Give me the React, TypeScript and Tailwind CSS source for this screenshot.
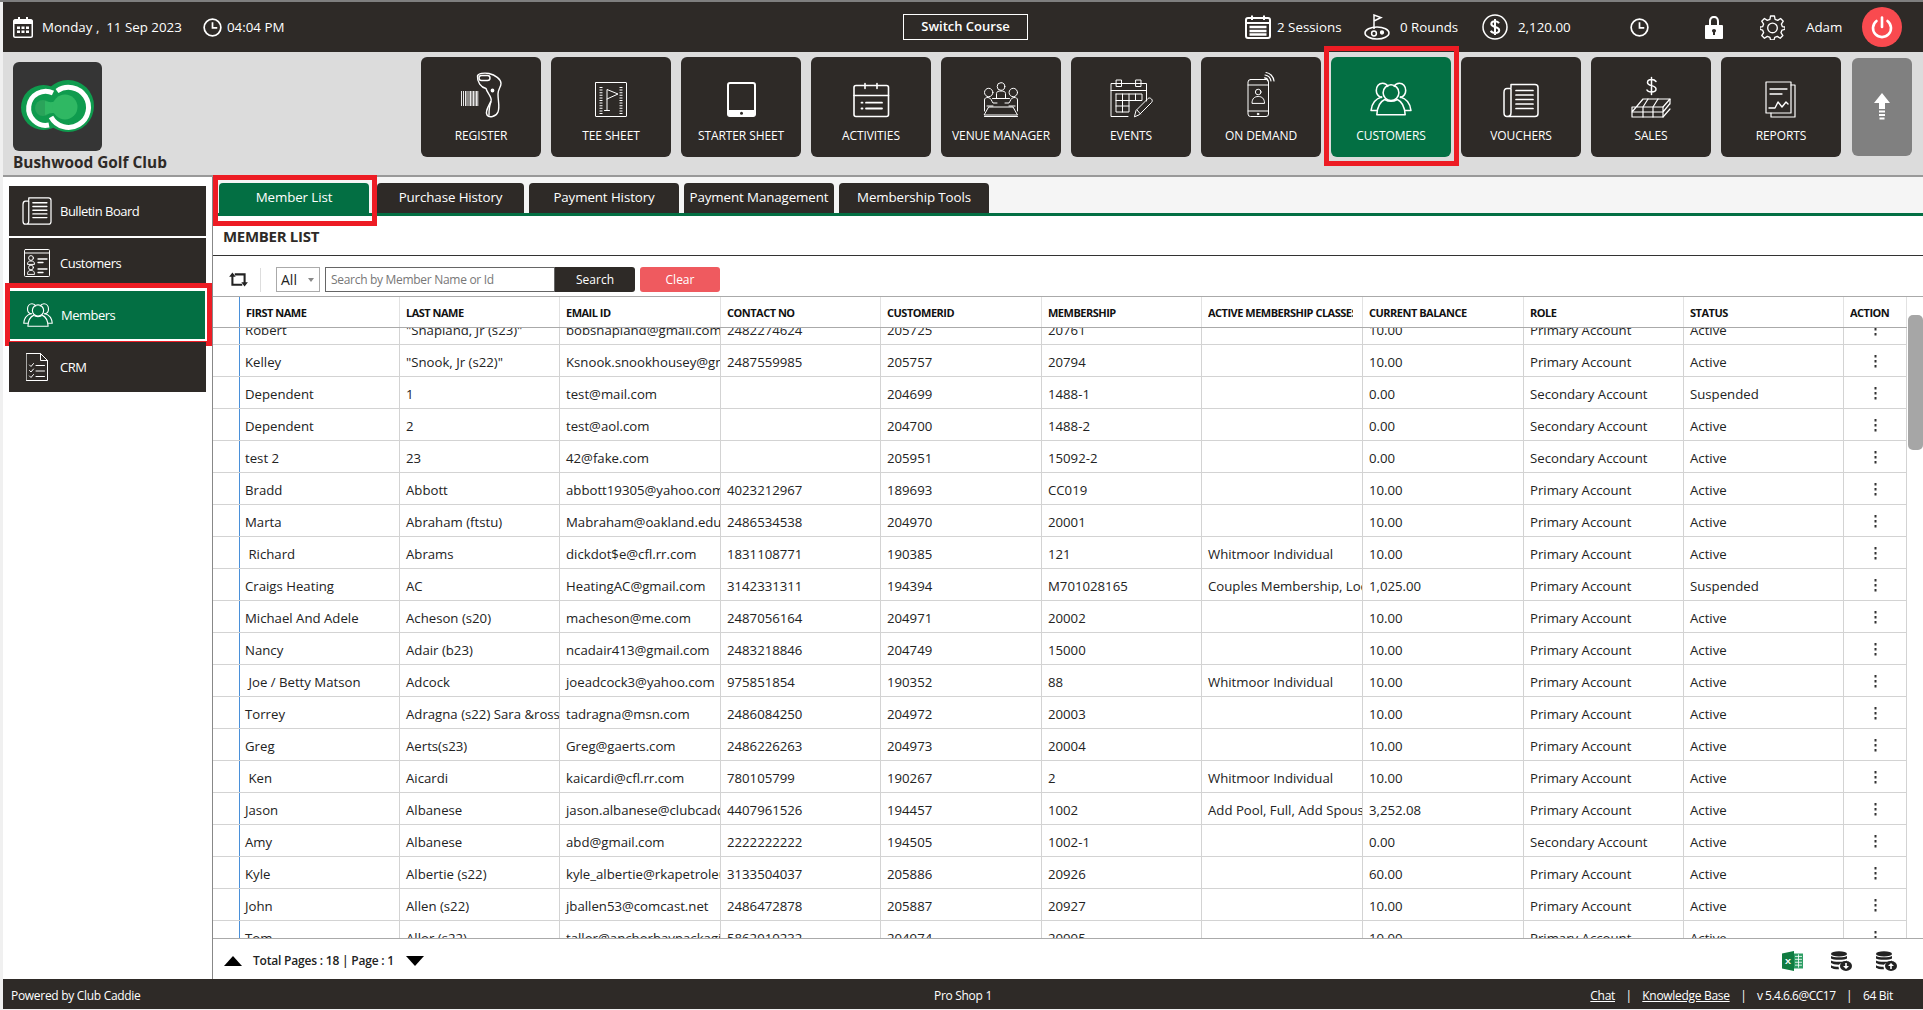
import React from 'react';

const font = { fontFamily: `'Open Sans', 'Noto Sans', sans-serif` };

type IconProps = { className?: string };

const stroke = { fill: 'none', stroke: 'currentColor', strokeWidth: 1.4, strokeLinecap: 'round', strokeLinejoin: 'round' } as const;

const NavSvg: React.FC<{ children: React.ReactNode }> = ({ children }) => (
  <svg viewBox="0 0 60 48" className="w-[60px] h-[48px] text-white" {...stroke}>{children}</svg>
);

const RegisterIcon = () => (
  <NavSvg>
    <path d="M26.5 5C27 2.5 33 1.5 38 2.5C44 4 50 8 50 12.5C50 16 47 18 47 23C47 30 49 36 47 41C45 46 38 47 36 44C34 41 37 36 40 30C41.5 26 36 22 35 17.5C30 16.5 26 11 26.5 5Z" />
    <rect x="28" y="4.5" width="11" height="5" rx="2.5" />
    <circle cx="41.5" cy="19.5" r="1.2" fill="currentColor" />
    <path d="M40 31C38 35 38 40 38 44" />
    <g stroke="currentColor" strokeLinecap="butt">
      <path d="M10.5 20V35M12.5 20V35M14.5 20V35M16 20V35M18 20V35M19.5 20V35M21 20V35M22.5 20V35M24 20V35M25.5 20V35M26.8 20V35" strokeWidth="0.9" />
    </g>
  </NavSvg>
);

const TeeSheetIcon = () => (
  <NavSvg>
    <rect x="14.5" y="11.5" width="31" height="34" rx="0.5" strokeWidth="1" />
    <path d="M20 16V43M40 16V43" strokeWidth="3" strokeDasharray="1 1.6" strokeLinecap="butt" />
    <path d="M26 39V18.5L37 23L26 28" strokeWidth="1" />
    <path d="M23.5 39.5H28.5" strokeWidth="1" />
  </NavSvg>
);

const TabletIcon = () => (
  <NavSvg>
    <rect x="17" y="12" width="27" height="33" rx="2" strokeWidth="2" />
    <path d="M17 39.5H44V43C44 44.5 43 45 42 45H19C18 45 17 44.5 17 43Z" fill="currentColor" strokeWidth="1" />
    <circle cx="30.5" cy="42.2" r="1.5" fill="#2e2a27" stroke="none" />
  </NavSvg>
);

const ActivitiesIcon = () => (
  <NavSvg>
    <rect x="13" y="14.5" width="34.5" height="31" rx="2" strokeWidth="1.6" />
    <path d="M13 24.5H47.5M24 12.5V17.5M36 12.5V17.5" strokeWidth="1.6" />
    <path d="M20.5 31.7H21.5M20.5 37.5H21.5M25 31.7H41M25 37.5H41" strokeWidth="1.8" />
  </NavSvg>
);

const VenueIcon = () => (
  <NavSvg>
    <g strokeWidth="1">
      <circle cx="17.7" cy="21.5" r="4.2" />
      <circle cx="30" cy="15.5" r="3.8" />
      <circle cx="42.3" cy="21.5" r="4.2" />
      <path d="M25.5 27V22.5C25.5 20.5 27.5 20 30 20C32.5 20 34.5 20.5 34.5 22.5V27" />
      <path d="M13.5 40V29C13.5 27 15 26.5 17 26.5C20 26.5 20.5 30 22 32H26M16 35H22" />
      <path d="M46.5 40V29C46.5 27 45 26.5 43 26.5C40 26.5 39.5 30 38 32H34M44 35H38" />
      <path d="M21.5 27.5H38.5M13.5 44H46.5L42 36H18Z" />
      <path d="M13.5 45.5H46.5" />
    </g>
  </NavSvg>
);

const EventsIcon = () => (
  <NavSvg>
    <g strokeWidth="1">
      <path d="M27 45.5H10V12.5H45.5V30" />
      <path d="M10 19.5H45.5" />
      <rect x="15.5" y="9" width="5" height="6.5" />
      <rect x="35" y="9" width="5" height="6.5" />
      <path d="M15 23H41V29.5H28M15 23V41H28V23M21.5 23V41M34.5 23V29.5M15 29.5H28M15 35H28" />
      <path d="M33.5 45.5L35 39.5L47 27.5C48 26.5 49.5 27 50.5 28C51.5 29 51.5 30.5 50.5 31.5L38.5 43.5Z" />
      <path d="M36 39L39.5 43" />
    </g>
  </NavSvg>
);

const OnDemandIcon = () => (
  <NavSvg>
    <g strokeWidth="1">
      <rect x="17" y="8.5" width="20.5" height="37" rx="2.5" />
      <path d="M17 14H37.5M17 40H37.5" />
      <circle cx="27.2" cy="21" r="2.8" />
      <path d="M21 32C21 27.5 23.5 25.5 27.2 25.5C31 25.5 33.5 27.5 33.5 32Z" />
      <circle cx="27" cy="43" r="0.8" fill="currentColor" />
      <path d="M34 4C37 4.5 39.5 7 40 10M35 1.5C39 2 42.5 5.5 43 10" strokeWidth="1.2" />
      <path d="M33.5 6.8C35.5 7 36.8 8.2 37 10" strokeWidth="1.2" />
    </g>
  </NavSvg>
);

const PeopleIcon: React.FC<IconProps> = ({ className }) => (
  <svg viewBox="0 0 40 34" className={className} {...stroke} strokeWidth={1.5}>
    <path d="M11 15.5C7.5 15 6 11.5 6 9C6 5 8.5 2 12 2C14 2 16 3 17 5" />
    <path d="M29 15.5C32.5 15 34 11.5 34 9C34 5 31.5 2 28 2C26 2 24 3 23 5" />
    <circle cx="20" cy="11" r="7.5" />
    <path d="M11 15C6 16.5 1.5 21 1 28H6.5" />
    <path d="M29 15C34 16.5 38.5 21 39 28H33.5" />
    <path d="M14 17.5C9.5 19.5 7 24 6.5 32H33.5C33 24 30.5 19.5 26 17.5C22.5 19.5 17.5 19.5 14 17.5Z" />
  </svg>
);

const NewspaperIcon: React.FC<IconProps> = ({ className }) => (
  <svg viewBox="0 0 36 34" className={className} {...stroke} strokeWidth={1.5}>
    <path d="M8 4V1H32C34 1 35 2 35 4V30C35 32 34 33 32 33H4C2 33 1 31 1 29V9C1 7 2 5 4 5H8M8 5V29C8 31 7 33 4 33" />
    <path d="M13 7H30M13 11.5H30M13 16H30M13 20.5H30M13 25H30" strokeWidth="1.7" />
  </svg>
);

const SalesIcon = () => (
  <NavSvg>
    <g strokeWidth="1.2">
      <path d="M35 10.5C34 9 32.5 8.5 30.5 8.5C28 8.5 26.5 9.7 26.5 11.5C26.5 15.5 35 13.8 35 18C35 20 33 21 30.5 21C28.5 21 26.5 20.3 26 19M30.5 6.5V23.5" strokeWidth="1.5" />
      <path d="M11 41L22 28H49L42 36H11V46H42L49 38" />
      <path d="M11 41H42M22 36L27 28M32 36L37 28M22 36V46M32 36V46M42 36V46M49 28V33M49 32.5L42 41" />
    </g>
  </NavSvg>
);

const ReportsIcon = () => (
  <NavSvg>
    <g strokeWidth="1.2">
      <rect x="15" y="11" width="25" height="31" />
      <path d="M40 14H44V46H20V42" />
      <path d="M19 18H36M19 23H31" strokeWidth="1.3" />
      <path d="M18 37L24 37L27 31L31 36L35 31L37 33" strokeWidth="1.4" />
    </g>
  </NavSvg>
);

const navItems: { label: string; icon: React.ReactNode; active?: boolean }[] = [
  { label: 'REGISTER', icon: <RegisterIcon /> },
  { label: 'TEE SHEET', icon: <TeeSheetIcon /> },
  { label: 'STARTER SHEET', icon: <TabletIcon /> },
  { label: 'ACTIVITIES', icon: <ActivitiesIcon /> },
  { label: 'VENUE MANAGER', icon: <VenueIcon /> },
  { label: 'EVENTS', icon: <EventsIcon /> },
  { label: 'ON DEMAND', icon: <OnDemandIcon /> },
  {
    label: 'CUSTOMERS',
    active: true,
    icon: (
      <div className="w-[60px] h-[48px] flex items-center justify-center pt-[7px]">
        <PeopleIcon className="w-[42px] h-[36px] text-white" />
      </div>
    ),
  },
  {
    label: 'VOUCHERS',
    icon: (
      <div className="w-[60px] h-[48px] flex items-center justify-center pt-[11px]">
        <NewspaperIcon className="w-[36px] h-[35px] text-white" />
      </div>
    ),
  },
  { label: 'SALES', icon: <SalesIcon /> },
  { label: 'REPORTS', icon: <ReportsIcon /> },
];

const columns = ['', 'FIRST NAME', 'LAST NAME', 'EMAIL ID', 'CONTACT NO', 'CUSTOMERID', 'MEMBERSHIP', 'ACTIVE MEMBERSHIP CLASSES', 'CURRENT BALANCE', 'ROLE', 'STATUS', 'ACTION'];

const P = 'Primary Account';
const S = 'Secondary Account';
const rows: string[][] = [
  ['Robert', '"Snapland, Jr (s23)"', 'bobshapland@gmail.com', '2482274624', '205725', '20761', '', '10.00', P, 'Active'],
  ['Kelley', '"Snook, Jr (s22)"', 'Ksnook.snookhousey@gmail.com', '2487559985', '205757', '20794', '', '10.00', P, 'Active'],
  ['Dependent', '1', 'test@mail.com', '', '204699', '1488-1', '', '0.00', S, 'Suspended'],
  ['Dependent', '2', 'test@aol.com', '', '204700', '1488-2', '', '0.00', S, 'Active'],
  ['test 2', '23', '42@fake.com', '', '205951', '15092-2', '', '0.00', S, 'Active'],
  ['Bradd', 'Abbott', 'abbott19305@yahoo.com', '4023212967', '189693', 'CC019', '', '10.00', P, 'Active'],
  ['Marta', 'Abraham (ftstu)', 'Mabraham@oakland.edu', '2486534538', '204970', '20001', '', '10.00', P, 'Active'],
  [' Richard', 'Abrams', 'dickdot$e@cfl.rr.com', '1831108771', '190385', '121', 'Whitmoor Individual', '10.00', P, 'Active'],
  ['Craigs Heating', 'AC', 'HeatingAC@gmail.com', '3142331311', '194394', 'M701028165', 'Couples Membership, Locker', '1,025.00', P, 'Suspended'],
  ['Michael And Adele', 'Acheson (s20)', 'macheson@me.com', '2487056164', '204971', '20002', '', '10.00', P, 'Active'],
  ['Nancy', 'Adair (b23)', 'ncadair413@gmail.com', '2483218846', '204749', '15000', '', '10.00', P, 'Active'],
  [' Joe / Betty Matson', 'Adcock', 'joeadcock3@yahoo.com', '975851854', '190352', '88', 'Whitmoor Individual', '10.00', P, 'Active'],
  ['Torrey', 'Adragna (s22) Sara &ross', 'tadragna@msn.com', '2486084250', '204972', '20003', '', '10.00', P, 'Active'],
  ['Greg', 'Aerts(s23)', 'Greg@gaerts.com', '2486226263', '204973', '20004', '', '10.00', P, 'Active'],
  [' Ken', 'Aicardi', 'kaicardi@cfl.rr.com', '780105799', '190267', '2', 'Whitmoor Individual', '10.00', P, 'Active'],
  ['Jason', 'Albanese', 'jason.albanese@clubcaddie.com', '4407961526', '194457', '1002', 'Add Pool, Full, Add Spouse', '3,252.08', P, 'Active'],
  ['Amy', 'Albanese', 'abd@gmail.com', '2222222222', '194505', '1002-1', '', '0.00', S, 'Active'],
  ['Kyle', 'Albertie (s22)', 'kyle_albertie@rkapetroleum.com', '3133504037', '205886', '20926', '', '60.00', P, 'Active'],
  ['John', 'Allen (s22)', 'jballen53@comcast.net', '2486472878', '205887', '20927', '', '10.00', P, 'Active'],
  ['Tom', 'Allor (s22)', 'tallor@anchorbaypackaging.com', '5862910232', '204974', '20005', '', '10.00', P, 'Active'],
];

const gridCols = 'grid grid-cols-[27px_160px_160px_161px_160px_161px_160px_161px_161px_160px_160px_63px] w-[1694px]';

const sideItems: { label: string; icon: React.ReactNode; active?: boolean }[] = [
  { label: 'Bulletin Board', icon: <NewspaperIcon className="w-[30px] h-[28px] text-white" /> },
  {
    label: 'Customers',
    icon: (
      <svg viewBox="0 0 26 28" className="w-[26px] h-[28px] text-white" {...stroke} strokeWidth={1}>
        <rect x="0.5" y="0.5" width="25" height="27" rx="1" />
        <path d="M0.5 4H25.5" />
        <circle cx="7" cy="9" r="2.4" />
        <path d="M3.5 15C3.5 12.5 5 12 7 12C9 12 10.5 12.5 10.5 15Z" />
        <circle cx="7" cy="18.5" r="2.4" />
        <path d="M3.5 25C3.5 22 5 21.5 7 21.5C9 21.5 10.5 22 10.5 25Z" />
        <path d="M14 10H23M14 13.5H19M14 20H23M14 23.5H19" strokeWidth="1.3" />
      </svg>
    ),
  },
  { label: 'Members', active: true, icon: <PeopleIcon className="w-[30px] h-[26px] text-white" /> },
  {
    label: 'CRM',
    icon: (
      <svg viewBox="0 0 22 28" className="w-[22px] h-[28px] text-white" {...stroke} strokeWidth={1}>
        <path d="M0.5 0.5H14.5L21.5 7.5V27.5H0.5Z" />
        <path d="M14.5 0.5V7.5H21.5" />
        <path d="M3.5 12L5 13.5L7.5 10.5M10 12.5H18.5M3.5 17.5L5 19L7.5 16M10 18H18.5M3.5 23L5 24.5L7.5 21.5M10 23.5H18.5" />
      </svg>
    ),
  },
];

const tabs = ['Member List', 'Purchase History', 'Payment History', 'Payment Management', 'Membership Tools'];
const tabWidths = ['w-[150px] mr-[8px]', 'w-[147px] mr-[5px]', 'w-[150px] mr-[5px]', 'w-[150px] mr-[5px]', 'w-[150px]'];

function Logo() {
  return (
    <div className="w-[89px] h-[89px] rounded-[6px] bg-[#353535]">
      <svg viewBox="0 0 89 89" className="w-[89px] h-[89px]">
        <circle cx="30.5" cy="45.5" r="22.5" fill="#0f9b4e" />
        <circle cx="55" cy="44" r="26" fill="#0f9b4e" />
        <path d="M40 31A17 17 0 1 0 36 63" fill="none" stroke="#fff" strokeWidth="5" />
        <path d="M44 29A20 20 0 1 1 38 55" fill="none" stroke="#fff" strokeWidth="5" />
        <circle cx="30" cy="46" r="8" fill="#2aa35a" />
        <path d="M32 39C37 40 38 41 42 39L44 52C40 50 37 51 32 53Z" fill="#2fb863" />
        <circle cx="52" cy="45" r="12.5" fill="#2fb863" />
      </svg>
    </div>
  );
}

export default function App() {
  return (
    <div className="w-[1923px] h-[1010px] overflow-hidden flex flex-col bg-[#f0f0f0] pl-[3px] text-[13.33px]" style={font}>
      <div className="h-[2px] bg-[#7f7f7f] -ml-[3px] shrink-0" />

      {/* top bar */}
      <div className="h-[50px] shrink-0 bg-[#2e2a27] text-white flex items-center">
        <svg viewBox="0 0 20 22" className="w-[20px] h-[22px] ml-[10px]" fill="currentColor">
          <path d="M2 3H5V1H7V3H13V1H15V3H18C19 3 20 4 20 5V20C20 21 19 22 18 22H2C1 22 0 21 0 20V5C0 4 1 3 2 3ZM1.5 8V20C1.5 20.3 1.7 20.5 2 20.5H18C18.3 20.5 18.5 20.3 18.5 20V8Z" />
          <path d="M4 10.5H7V13H4ZM8.5 10.5H11.5V13H8.5ZM13 10.5H16V13H13ZM4 14.5H7V17H4ZM8.5 14.5H11.5V17H8.5ZM13 14.5H16V17H13Z" />
        </svg>
        <span className="ml-[9px] w-[161px] pt-[2px] whitespace-nowrap">Monday ,&nbsp; 11 Sep 2023</span>
        <svg viewBox="0 0 20 20" className="w-[19px] h-[19px]" fill="none" stroke="currentColor" strokeWidth="1.8">
          <circle cx="10" cy="10" r="8.8" />
          <path d="M10 4.5V10.5H15" />
        </svg>
        <span className="ml-[5px] w-[676px] pt-[2px] whitespace-nowrap">04:04 PM</span>
        <div className="w-[125px] h-[26px] border border-white flex items-center justify-center font-semibold text-[13px]">Switch Course</div>
        <svg viewBox="0 0 26 24" className="w-[26px] h-[24px] ml-[217px]" fill="none" stroke="currentColor" strokeWidth="2">
          <rect x="1" y="3" width="24" height="20" rx="2" />
          <path d="M1 8H25M7 0.5V5M19 0.5V5" />
          <path d="M4.5 12H21.5M4.5 16H21.5M4.5 19.5H21.5" strokeWidth="2.6" />
        </svg>
        <span className="ml-[6px] w-[87px] pt-[2px] whitespace-nowrap">2 Sessions</span>
        <svg viewBox="0 0 26 26" className="w-[26px] h-[26px]" fill="none" stroke="currentColor" strokeWidth="1.5">
          <path d="M10 15V1L17 3.5L10 7" />
          <ellipse cx="13" cy="19" rx="12" ry="6" />
          <circle cx="10" cy="19.5" r="2.4" />
          <circle cx="18" cy="18.5" r="1.4" fill="currentColor" />
        </svg>
        <span className="ml-[10px] w-[82px] pt-[2px] whitespace-nowrap">0 Rounds</span>
        <svg viewBox="0 0 26 26" className="w-[26px] h-[26px]" fill="none" stroke="currentColor" strokeWidth="1.5">
          <circle cx="13" cy="13" r="12" />
          <path d="M17 9.2C16.3 7.8 15 7.2 13 7.2C10.8 7.2 9.3 8.3 9.3 10C9.3 14 17.2 12 17.2 16.2C17.2 18 15.5 19 13 19C11 19 9.5 18.2 8.8 16.8M13 5V21" strokeWidth="2" />
        </svg>
        <span className="ml-[10px] w-[112px] pt-[2px] whitespace-nowrap">2,120.00</span>
        <svg viewBox="0 0 20 20" className="w-[19px] h-[19px]" fill="none" stroke="currentColor" strokeWidth="1.8">
          <circle cx="10" cy="10" r="8.8" />
          <path d="M10 4.5V10.5H15" />
        </svg>
        <svg viewBox="0 0 18 24" className="w-[18px] h-[24px] ml-[56px]" fill="currentColor">
          <path d="M4 10V6.5C4 3 6 1 9 1C12 1 14 3 14 6.5V10H12V6.5C12 4 11 3 9 3C7 3 6 4 6 6.5V10Z" />
          <path fillRule="evenodd" d="M1 10H17C17.5 10 18 10.5 18 11V23C18 23.5 17.5 24 17 24H1C0.5 24 0 23.5 0 23V11C0 10.5 0.5 10 1 10ZM9 14C7.8 14 7 14.8 7 15.8C7 16.6 7.4 17.1 8 17.4V20H10V17.4C10.6 17.1 11 16.6 11 15.8C11 14.8 10.2 14 9 14Z" />
        </svg>
        <svg viewBox="0 0 26 26" className="w-[25px] h-[25px] ml-[37px]" fill="none" stroke="currentColor" strokeWidth="1.4" strokeLinejoin="round">
          <path d="M11 1H15L15.7 4.5L18.4 5.6L21.4 3.6L24.2 6.4L22.2 9.4L23.3 12.1L26 12.5V15L22.9 15.7L21.8 18.4L23.8 21.4L21 24.2L18 22.2L15.3 23.3L14.6 26H11L10.3 23.3L7.6 22.2L4.6 24.2L1.8 21.4L3.8 18.4L2.7 15.7L0 15V12.5L2.7 12.1L3.8 9.4L1.8 6.4L4.6 3.6L7.6 5.6L10.3 4.5Z" />
          <circle cx="13" cy="13.5" r="5" />
        </svg>
        <span className="ml-[21px] w-[56px] pt-[2px] whitespace-nowrap">Adam</span>
        <div className="w-[40px] h-[40px] rounded-full bg-[#f94a4f] flex items-center justify-center">
          <svg viewBox="0 0 24 24" className="w-[24px] h-[24px]" fill="none" stroke="currentColor" strokeWidth="2.6" strokeLinecap="round">
            <path d="M12 2.5V12" />
            <path d="M6.5 6A9 9 0 1 0 17.5 6" />
          </svg>
        </div>
      </div>

      {/* header with logo and big buttons */}
      <div className="h-[125px] shrink-0 bg-[#dcdcdc] border-b-2 border-[#999] flex">
        <div className="w-[418px] pl-[10px] pt-[10px] shrink-0">
          <Logo />
          <div className="mt-[2px] font-bold text-[15.4px] text-[#2e2a27] whitespace-nowrap leading-[20px]">Bushwood Golf Club</div>
        </div>
        <div className="flex gap-[10px] pt-[5px] items-start">
          {navItems.map((item) => (
            <div key={item.label} className="relative shrink-0">
              <div className={`w-[120px] h-[100px] rounded-[6px] text-white flex flex-col items-center pt-[14px] ${item.active ? 'bg-[#036f43]' : 'bg-[#2e2a27]'}`}>
                {item.icon}
                <div className="mt-[9px] text-[12px] leading-[16px] font-medium whitespace-nowrap tracking-[-0.1px]">{item.label}</div>
              </div>
              {item.active && <div className="absolute -left-[7px] -right-[8px] -top-[11px] -bottom-[9px] border-[5px] border-[#ed1c24]" />}
            </div>
          ))}
          <div className="w-[60px] h-[98px] mt-[1px] ml-[1px] shrink-0 rounded-[6px] bg-[#808080] flex items-center justify-center">
            <svg viewBox="0 0 16 28" className="w-[16px] h-[28px] text-white" fill="currentColor">
              <path d="M8 0L16 10H11V16H5V10H0Z" />
              <path d="M5 17.5H11V19.5H5ZM5 21H11V23H5ZM5.5 24.5H10.5V26.5H5.5Z" />
            </svg>
          </div>
        </div>
      </div>

      {/* body */}
      <div className="flex-1 flex min-h-0">
        <div className="w-[210px] shrink-0 bg-white border-r-[1.5px] border-[#888] pl-[6px] pt-[9px] flex flex-col gap-[2px] text-[13px]">
          {sideItems.map((item) => (
            <div key={item.label} className="relative w-[197px]">
              <div className={`h-[50px] flex items-center text-white ${item.active ? 'bg-[#036f43] border border-white' : 'bg-[#2e2a27]'}`}>
                <div className="w-[51px] flex justify-center shrink-0 pl-[4px]">{item.icon}</div>
                <span className="whitespace-nowrap tracking-[-0.5px] pt-[1px]">{item.label}</span>
              </div>
              {item.active && <div className="absolute -left-[4px] -right-[6px] -top-[7px] -bottom-[6px] border-[5px] border-[#ed1c24]" />}
            </div>
          ))}
        </div>

        <div className="flex-1 min-w-0 bg-white flex flex-col">
          {/* tabs */}
          <div className="h-[39px] shrink-0 bg-[#f5f5f5] border-b-[3px] border-[#036f43] flex items-end pl-[6px]">
            {tabs.map((t, i) => (
              <div key={t} className={`relative h-[30px] shrink-0 ${tabWidths[i]}`}>
                <div className={`rounded-t-[4px] flex items-center justify-center text-white whitespace-nowrap tracking-[-0.1px] ${i === 0 ? 'h-[33px] pb-[3px] bg-[#036f43]' : 'h-[30px] bg-[#2e2a27]'}`}>{t}</div>
                {i === 0 && <div className="absolute -left-[6px] -right-[8px] -top-[8px] -bottom-[13px] border-[5px] border-[#ed1c24]" />}
              </div>
            ))}
          </div>

          <div className="h-[40px] shrink-0 border-b border-[#333] pl-[10px] pt-[7px] font-bold text-[15px] leading-[26px] text-[#2e2a27] tracking-[-0.3px]">MEMBER LIST</div>

          {/* search toolbar */}
          <div className="h-[41px] shrink-0 border-b-[1.5px] border-[#aaa] pt-[7px] flex items-center">
            <svg viewBox="0 0 20 16" className="w-[19px] h-[15px] ml-[16px] text-[#222]" fill="none" stroke="currentColor" strokeWidth="2.2">
              <path d="M3.5 3V13.5H14" />
              <path d="M6 2.5H16.5V13" />
              <path d="M0 5L3.5 0.5L7 5ZM13 11L16.5 15.5L20 11Z" fill="currentColor" stroke="none" />
            </svg>
            <div className="w-px h-[24px] bg-[#ddd] ml-[12px]" />
            <div className="ml-[15px] w-[44px] h-[25px] border-[1.5px] border-[#aaa] flex items-center justify-between pl-[4px] pr-[5px] text-[14px] text-[#222]">
              All
              <span className="w-0 h-0 border-x-[3px] border-x-transparent border-t-[4px] border-t-[#888]" />
            </div>
            <input
              readOnly
              placeholder="Search by Member Name or Id"
              className="ml-[5px] w-[230px] h-[25px] border-[1.5px] border-[#666] px-[5px] text-[12px] outline-none placeholder:text-[#777] tracking-[-0.3px]"
            />
            <div className="w-[80px] h-[25px] bg-[#2e2a27] rounded-r-[3px] text-white text-[12px] flex items-center justify-center">Search</div>
            <div className="w-[80px] h-[25px] ml-[5px] bg-[#ef5a5f] rounded-[3px] text-white text-[12px] flex items-center justify-center">Clear</div>
          </div>

          {/* table */}
          <div className="flex-1 min-h-0 relative flex">
            <div className="flex-1 min-w-0 flex flex-col">
              <div className={`${gridCols} h-[31px] shrink-0 border-b border-[#aaa] relative z-10 bg-white`}>
                {columns.map((c, i) => (
                  <div key={i} className={`flex items-center pr-[9px] pt-[2px] border-r border-[#e2e2e2] ${i === 0 ? 'border-r-[#4a90d9]' : 'pl-[6px]'}`}>
                    <span className="block w-full overflow-hidden whitespace-nowrap font-bold text-[11px] text-[#111] tracking-[-0.5px]">{c}</span>
                  </div>
                ))}
              </div>
              <div className="flex-1 min-h-0 overflow-hidden">
                <div className="-mt-[15px]">
                  {rows.map((r, ri) => (
                    <div key={ri} className={`${gridCols} h-[32px] border-b-[1.5px] border-[#d3d3d3] text-[#222] text-[13.2px]`}>
                      <div className="border-r border-[#4a90d9]" />
                      {r.map((v, ci) => (
                        <div key={ci} className={`flex items-center overflow-hidden whitespace-pre border-r border-[#d3d3d3] pt-[5px] ${ci === 0 ? 'pl-[5px]' : 'pl-[6px]'}`}>
                          {v}
                        </div>
                      ))}
                      <div className="flex items-center justify-center border-r border-[#d3d3d3] pt-[2px]">
                        <svg viewBox="0 0 3 13" className="w-[3px] h-[13px] text-[#333]" fill="currentColor">
                          <path d="M0.5 0H2.5V2.5H0.5ZM0.5 5H2.5V7.5H0.5ZM0.5 10H2.5V12.5H0.5Z" />
                        </svg>
                      </div>
                    </div>
                  ))}
                </div>
              </div>
            </div>
            <div className="w-[16px] shrink-0 pl-[1px]">
              <div className="w-[15px] h-[135px] mt-[18px] rounded-[5px] bg-[#a6a6a6]" />
            </div>
          </div>

          {/* footer of the table */}
          <div className="h-[41px] shrink-0 border-t-[1.5px] border-[#aaa] flex items-center pl-[11px] pr-[26px] pt-[3px]">
            <span className="w-0 h-0 border-x-[9px] border-x-transparent border-b-[10px] border-b-black" />
            <span className="ml-[11px] font-semibold text-[12px] whitespace-nowrap tracking-[-0.2px] text-[#222]">Total Pages : 18 | Page : 1</span>
            <span className="ml-[12px] w-0 h-0 border-x-[9px] border-x-transparent border-t-[10px] border-t-black" />
            <div className="ml-auto flex items-center">
              <svg viewBox="0 0 21 24" preserveAspectRatio="none" className="w-[21px] h-[20px]">
                <path d="M0 3L12 0V24L0 21Z" fill="#107c41" />
                <path d="M12 3H21V21H12Z" fill="#2f9e65" />
                <path d="M13 6.5H20M13 10H20M13 13.5H20M13 17H20M16.5 4V20" stroke="#fff" strokeWidth="0.9" />
                <text x="6" y="15.5" fontSize="9" fontWeight="700" fill="#fff" textAnchor="middle">X</text>
              </svg>
              <div className="ml-[28px]"><DbIcon dir="down" /></div>
              <div className="ml-[24px]"><DbIcon dir="up" /></div>
            </div>
          </div>
        </div>
      </div>

      {/* status bar */}
      <div className="h-[30px] shrink-0 mb-px bg-[#2e2a27] text-white text-[12px] flex items-center pl-[8px] pt-[3px] relative tracking-[-0.3px]">
        <span>Powered by Club Caddie</span>
        <span className="absolute left-[931px]">Pro Shop 1</span>
        <div className="ml-auto flex items-center pr-[30px] whitespace-nowrap">
          <span className="underline">Chat</span>
          <span className="mx-[10.5px]">|</span>
          <span className="underline">Knowledge Base</span>
          <span className="mx-[10.5px]">|</span>
          <span className="tracking-[-0.5px]">v 5.4.6.6@CC17</span>
          <span className="mx-[10.5px]">|</span>
          <span>64 Bit</span>
        </div>
      </div>
    </div>
  );
}

function DbIcon({ dir }: { dir: 'up' | 'down' }) {
  return (
    <svg viewBox="0 0 21 24" preserveAspectRatio="none" className="w-[21px] h-[20px] text-[#222]" fill="currentColor">
      <ellipse cx="8" cy="3.5" rx="8" ry="3.2" />
      <path d="M0 6C1.5 8 14.5 8 16 6V9C14.5 11 1.5 11 0 9ZM0 11.5C1.5 13.5 14.5 13.5 16 11.5V13C11 14 9 15 8 16.5C4 16.5 1 15.5 0 14.5ZM0 17C1.5 18.5 5 19 7.5 19L8 22C4 22 1 21 0 20Z" />
      <circle cx="15" cy="18" r="6" />
      <path d={dir === 'down' ? 'M14.2 14.5H15.8V18H18L15 21.5L12 18H14.2Z' : 'M14.2 21.5H15.8V18H18L15 14.5L12 18H14.2Z'} fill="#fff" />
    </svg>
  );
}
